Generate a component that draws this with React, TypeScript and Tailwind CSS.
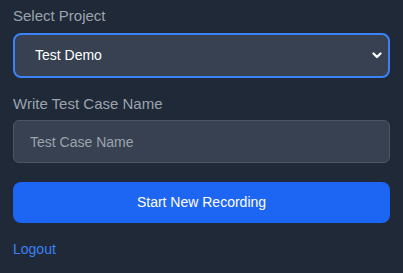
import React from "react";

export default function App() {
  return (
    <div className="flex h-[273px] w-[403px] flex-col items-start bg-[#1f2937] px-[13px] pt-[6px] font-['Liberation_Sans',Arial,sans-serif]">
      <label className="block text-[15px] leading-[20px] text-[#9ca3af]">Select Project</label>
      <div className="relative mt-[7px] w-full">
        <select
          defaultValue="demo"
          className="block h-[45px] w-full appearance-none rounded-[8px] border-2 border-[#3b82f6] bg-[#374151] pl-[20px] pr-[30px] text-[14px] text-white outline-none"
        >
          <option value="demo">Test Demo</option>
        </select>
        <svg
          className="pointer-events-none absolute right-[8px] top-[19px]"
          width="10"
          height="7"
          viewBox="0 0 10 7"
          fill="none"
        >
          <path d="M1.5 1.5 L5 5 L8.5 1.5" stroke="white" strokeWidth="2.2" strokeLinecap="round" strokeLinejoin="round" />
        </svg>
      </div>
      <label className="mt-[16px] block text-[15px] leading-[20px] text-[#9ca3af]">Write Test Case Name</label>
      <input
        placeholder="Test Case Name"
        className="mt-[6px] block h-[43px] w-full rounded-[6px] border border-[#4b5563] bg-[#374151] px-[16px] text-[14px] text-white outline-none placeholder:text-[#9ca3af]"
      />
      <button className="mt-[19px] block h-[41px] w-full rounded-[8px] bg-[#1d66f3] text-[14px] text-white">
        Start New Recording
      </button>
      <a href="#" className="mt-[16px] inline-block text-[14px] leading-[20px] text-[#3b82f6]">
        Logout
      </a>
    </div>
  );
}
